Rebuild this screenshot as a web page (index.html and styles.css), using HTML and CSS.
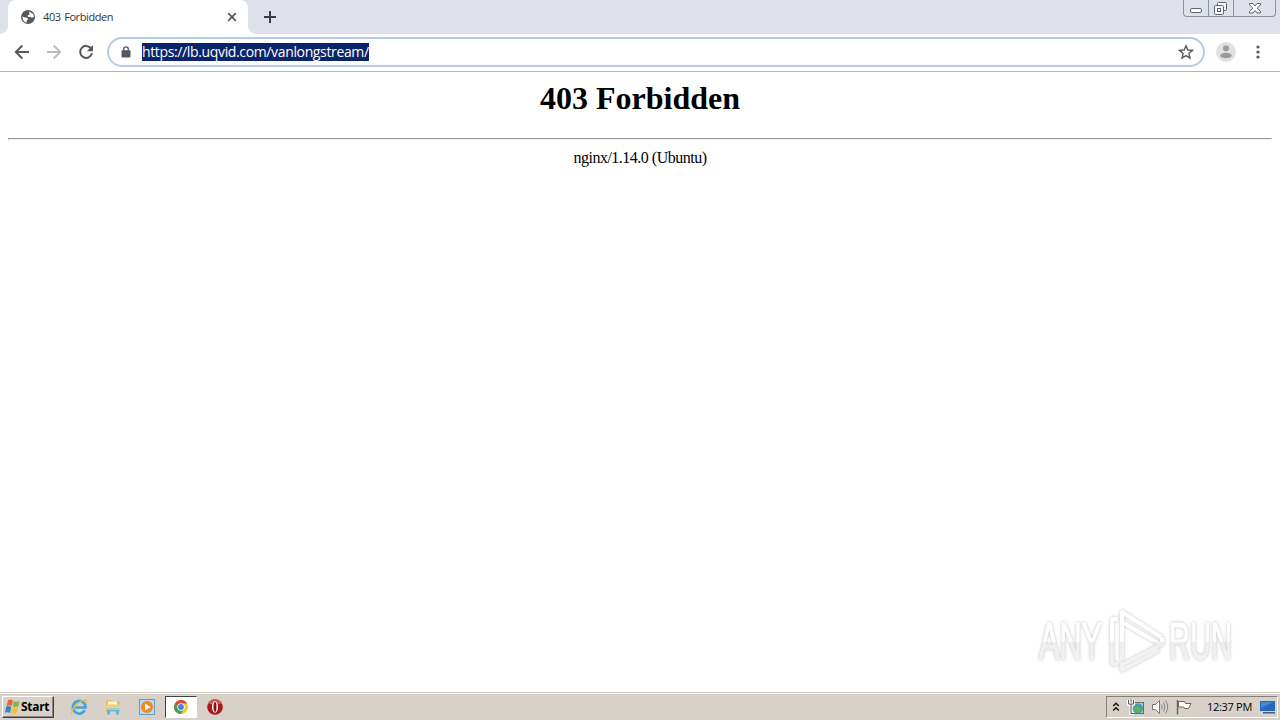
FILE: index.html
```html
<!DOCTYPE html>
<html lang="en">
<head>
    <meta charset="UTF-8">
    <title>403 Forbidden</title>
    <link rel="stylesheet" href="styles.css">
</head>
<body>
    <div class="tab-strip">
        <div class="tab-edge"></div>
        <div class="tab">
            <svg class="globe" width="16" height="16" viewBox="0 0 16 16">
                <circle cx="8" cy="8" r="7" fill="#55595e"/>
                <path d="M2.500 7.500 5 8.500l2 .2 1.200 1.500-1.400 1.100-.3 2.500C4 13.200 2.300 10.800 2.500 7.500zM9 2.500l4 2.200 1 3-2 1.100-2-1-1.800.2-.7-1.500 2-.8z" fill="#fff"/>
            </svg>
            <span class="tab-title">403 Forbidden</span>
            <svg class="tab-close" width="10" height="10" viewBox="0 0 10 10">
                <path d="M1.200 1.200l7.600 7.600M8.800 1.200L1.200 8.800" stroke="#54585d" stroke-width="1.700"/>
            </svg>
        </div>
        <div class="new-tab">
            <svg width="12" height="12" viewBox="0 0 12 12">
                <path d="M6 0v12M0 6h12" stroke="#3a3e44" stroke-width="2"/>
            </svg>
        </div>
        <div class="window-buttons">
            <div class="win-btn">
                <svg width="24" height="16" viewBox="0 0 24 16"><rect x="6.500" y="8.500" width="11" height="4" rx="1.500" fill="#fff" stroke="#5c6370"/></svg>
            </div>
            <div class="win-btn">
                <svg width="24" height="16" viewBox="0 0 24 16" fill="#f7f8fa" stroke="#5c6370"><rect x="8.500" y="2.500" width="9" height="8" rx="1"/><rect x="5.500" y="5.500" width="9" height="9" rx="1"/><rect x="8.500" y="8.500" width="3" height="3"/></svg>
            </div>
            <div class="win-btn wide">
                <svg width="42" height="16" viewBox="0 0 42 16"><path d="M15.500 3.500h3.500l2 2.500 2-2.500h3.500v1.500L23.200 8l3.300 3.500V13H23l-2-2.500L19 13h-3.500v-1.500L18.800 8 15.500 5z" fill="#fff" stroke="#5c6370"/></svg>
            </div>
        </div>
    </div>

    <div class="toolbar">
        <div class="nav">
            <svg width="16" height="16" viewBox="0 0 16 16" fill="none" stroke="#54585d" stroke-width="1.900"><path d="M15 8H2M8.300 1.500L1.800 8l6.500 6.500"/></svg>
            <svg width="16" height="16" viewBox="0 0 16 16" fill="none" stroke="#b9bbbd" stroke-width="1.900"><path d="M1 8h13M7.700 1.500L14.200 8l-6.500 6.500"/></svg>
            <svg width="16" height="16" viewBox="0 0 16 16"><path d="M13.200 4.600A6 6 0 1 0 14 9.300" fill="none" stroke="#54585d" stroke-width="2"/><path d="M15 1v6.200H8.800z" fill="#54585d"/></svg>
        </div>
        <div class="omnibox">
            <svg class="lock" width="10" height="12" viewBox="0 0 10 12"><path d="M2.700 5V3.200a2.300 2.300 0 0 1 4.600 0V5" fill="none" stroke="#54585d" stroke-width="1.300"/><rect x=".5" y="4.300" width="9" height="7.200" rx="1" fill="#54585d"/></svg>
            <span class="url">https://lb.uqvid.com/vanlongstream/</span>
            <svg class="star" width="16" height="16" viewBox="0 0 16 16"><path d="M8 1.800l1.800 4.200 4.700.4-3.600 3 1.100 4.600L8 11.600 4 14l1.100-4.600-3.600-3L6.200 6z" fill="none" stroke="#54585d" stroke-width="1.400"/></svg>
        </div>
        <svg class="avatar" width="20" height="20" viewBox="0 0 20 20"><circle cx="10" cy="10" r="10" fill="#e1e1e1"/><circle cx="10" cy="6.300" r="3" fill="#9b9b9b"/><path d="M4.200 14c0-4.200 11.600-4.200 11.600 0-1.800 3-9.800 3-11.600 0z" fill="#9b9b9b"/></svg>
        <svg class="menu" width="4" height="14" viewBox="0 0 4 14" fill="#54585d"><circle cx="2" cy="2" r="1.600"/><circle cx="2" cy="7" r="1.600"/><circle cx="2" cy="12" r="1.600"/></svg>
    </div>

    <div class="page">
        <h1>403 Forbidden</h1>
        <hr>
        <div class="server">nginx/1.14.0 (Ubuntu)</div>
        <svg class="watermark" width="210" height="74" viewBox="0 0 210 74">
            <defs>
                <linearGradient id="shade" gradientUnits="userSpaceOnUse" x1="0" y1="0" x2="0" y2="74">
                    <stop offset=".49" stop-color="#fff"/>
                    <stop offset=".5" stop-color="#efefef"/>
                    <stop offset="1" stop-color="#f4f4f4"/>
                </linearGradient>
            </defs>
            <g class="mark-text" fill="url(#shade)" stroke="url(#shade)">
                <text x="9" y="54" textLength="63" lengthAdjust="spacingAndGlyphs">ANY</text>
                <text x="139" y="54" textLength="63" lengthAdjust="spacingAndGlyphs">RUN</text>
            </g>
            <g class="mark-logo" fill="none" stroke="url(#shade)">
                <path d="M88 14h-6v44l6 2"/>
                <path d="M92 55V7l39 25M92 17l39 23"/>
                <path d="M132 32v7L92 60v5l37-20"/>
            </g>
        </svg>
    </div>

    <div class="taskbar">
        <div class="start">
            <svg width="17" height="16" viewBox="0 0 17 16">
                <path d="M4 1.200c2-1 3.400-.7 5 .2L7.600 7c-1.800-1-3.300-1-5-.3z" fill="#ed6337"/>
                <path d="M9.800 1.900c2 .9 3.800.9 6 0L14.300 7.600c-2 .8-3.800.7-5.900-.3z" fill="#83b84a"/>
                <path d="M2.200 7.600c2-.8 3.500-.6 5.100.3L6 14c-1.700-1-3.200-1-5.200-.2z" fill="#3c86c6"/>
                <path d="M8.200 8.400c2 .9 3.700 1 5.900.1L12.600 14.500c-2 .9-3.800.8-5.800-.1z" fill="#f5c33b"/>
            </svg>
            <span>Start</span>
        </div>
        <div class="quick-launch">
            <div class="task">
                <svg width="18" height="18" viewBox="0 0 18 18" fill="none"><path d="M14.800 12.200A6.300 6.300 0 1 1 15.500 9.500H5" stroke="#43a5dc" stroke-width="2.700"/><path d="M2.200 15.600C-.5 13.500 7 4.500 14 2.200c3-.9 3 1 1.700 2.800" stroke="#e9bd45" stroke-width="1.400"/></svg>
            </div>
            <div class="task">
                <svg width="18" height="18" viewBox="0 0 18 18"><path d="M2 2h6l1 1.500h7V14H2z" fill="#e0c264"/><path d="M4 3.500h9v5H4z" fill="#fff6c9"/><path d="M2 6.500h14v4H2z" fill="#ecd27c"/><path d="M3 16.500v-6h12v6h-3V13H6v3.500z" fill="#65b5dc"/><path d="M3 10.500h12v1.300H3z" fill="#a4d9ed"/></svg>
            </div>
            <div class="task">
                <svg width="18" height="18" viewBox="0 0 18 18"><rect x="1.500" y="1.500" width="15" height="15" fill="#b9daf1" stroke="#6a9dc7"/><circle cx="9" cy="9" r="6" fill="#f18a20"/><path d="M7 5.500l5.500 3.500L7 12.500z" fill="#fff"/></svg>
            </div>
            <div class="task active">
                <svg width="16" height="16" viewBox="0 0 16 16"><circle cx="8" cy="8" r="7" fill="#f6c934"/><path d="M1.900 4.500A7 7 0 0 1 14.100 4.500H8L5 9.800z" fill="#d9463b"/><path d="M1.900 4.500L5 9.800 8 11.500l3-1.700L8 15A7 7 0 0 1 1.900 4.500z" fill="#3f9c57"/><circle cx="8" cy="8" r="3.700" fill="#fff"/><circle cx="8" cy="8" r="2.900" fill="#4581df"/></svg>
            </div>
            <div class="task">
                <svg width="18" height="18" viewBox="0 0 18 18"><circle cx="9" cy="9" r="7.800" fill="#a7191c"/><path d="M2.500 6a7 7 0 0 1 13 0z" fill="#cf5757"/><ellipse cx="9" cy="9" rx="3" ry="5.800" fill="#fff"/><ellipse cx="9" cy="9" rx="1.500" ry="4.900" fill="#8a1215"/></svg>
            </div>
        </div>
        <div class="tray">
            <svg class="chevrons" width="8" height="10" viewBox="0 0 8 10" fill="none" stroke="#111" stroke-width="1.500"><path d="M1.200 4L4 1.300 6.800 4M1.200 8.500L4 5.800l2.800 2.700"/></svg>
            <svg width="18" height="16" viewBox="0 0 18 16"><rect x="4.500" y="3.500" width="12" height="11" fill="#a9cbd1" stroke="#5d6c70"/><circle cx="11" cy="9.500" r="5" fill="#3f9fac"/><path d="M7 8q3-3 5 0l3 2-4 4-3-1z" fill="#62ae66"/><path d="M1.500 1v4h5V1M4 5v9.500h3M4 0v3" fill="none" stroke="#fff" stroke-width="3"/><path d="M1.500 1v4h5V1M4 5v9.500h3M4 0v3" fill="none" stroke="#555"/></svg>
            <svg width="18" height="16" viewBox="0 0 18 16"><path d="M1.500 5.500h3l4-4v13l-4-4h-3z" fill="#fff" stroke="#777"/><path d="M10.500 5.500q1.500 2.500 0 5M12.500 3.500q3 4.500 0 9M14.500 1.500q4.500 6.500 0 13" fill="none" stroke="#858585"/></svg>
            <svg width="18" height="16" viewBox="0 0 18 16"><path d="M3.500 2.500h6l1 2h5.500l-2.500 5h-4l-1-1.500h-5z" fill="#fff" stroke="#666"/><path d="M2.500 1v14.500" stroke="#666" stroke-width="1.500"/></svg>
            <span class="clock">12:37 PM</span>
            <svg class="desktop" width="18" height="14" viewBox="0 0 18 14"><path d="M1 1h15v10H1z" fill="#2668bd"/><path d="M2 2h13L2 8z" fill="#4289d4"/><path d="M4 12h12v1.500H4z" fill="#435b7a"/></svg>
        </div>
    </div>
</body>
</html>
```

FILE: styles.css
```css
* {
    box-sizing: border-box;
}

body {
    margin: 0;
    width: 1280px;
    height: 720px;
    display: flex;
    flex-direction: column;
    overflow: hidden;
    background: #fff;
    font-family: "Open Sans", "Liberation Sans", sans-serif;
}

svg {
    display: block;
    flex-shrink: 0;
}

/* Browser tabs */
.tab-strip {
    display: flex;
    flex: 0 0 34px;
    background: #dee1e9;
}

.tab-edge {
    width: 8px;
    background: radial-gradient(circle at 0 0, transparent 7.5px, #fff 8px) 0 100% / 8px 8px no-repeat;
}

.tab {
    display: flex;
    align-items: center;
    width: 240px;
    padding: 0 11px 0 12px;
    background: #fff;
    border-radius: 8px 8px 0 0;
}

.tab-title {
    flex: 1;
    margin-left: 7px;
    padding-bottom: 2px;
    font-size: 11px;
    letter-spacing: -0.4px;
    word-spacing: 1px;
    color: #34383d;
}

.new-tab {
    display: flex;
    align-items: center;
    flex: 1;
    padding-left: 16px;
    background: radial-gradient(circle at 100% 0, transparent 7.5px, #fff 8px) 0 100% / 8px 8px no-repeat;
}

.window-buttons {
    display: flex;
    width: 93px;
    height: 17px;
    margin-right: 4px;
    border: 1px solid #8b919d;
    border-top: 0;
    border-radius: 0 0 4px 4px;
}

.win-btn {
    width: 25px;
    border-right: 1px solid #8b919d;
}

.win-btn.wide {
    width: 42px;
    border: 0;
}

/* Address row */
.toolbar {
    display: flex;
    align-items: center;
    flex: 0 0 38px;
    padding: 0 20px 1px 14px;
    border-bottom: 1px solid #b4b5b7;
}

.nav {
    display: flex;
    gap: 16px;
    width: 93px;
}

.omnibox {
    display: flex;
    align-items: center;
    width: 1098px;
    height: 30px;
    padding: 0 9px 0 12px;
    border: 2px solid #b5cbed;
    border-radius: 15px;
}

.url {
    width: 227px;
    height: 18px;
    margin-left: 11px;
    line-height: 18px;
    font-size: 14px;
    letter-spacing: -0.36px;
    white-space: nowrap;
    color: #fff;
    background: #0a246a;
}

.star {
    margin-left: auto;
}

.avatar {
    margin-left: 11px;
}

.menu {
    margin-left: auto;
}

/* Error page */
.page {
    position: relative;
    flex: 1;
    padding: 8px;
    font-family: "Liberation Serif", "Times New Roman", serif;
    text-align: center;
    color: #000;
}

h1 {
    margin: 0 0 21px;
    font-size: 32px;
    line-height: 37px;
}

hr {
    margin: 0 0 9px;
}

.server {
    font-size: 16px;
    line-height: 18px;
    letter-spacing: -0.5px;
}

.watermark {
    position: absolute;
    left: 1030px;
    top: 533px;
    overflow: visible;
    filter: drop-shadow(0 0 1.5px rgba(0, 0, 0, 0.25));
}

.mark-text {
    font-family: "Liberation Sans", Arial, sans-serif;
    font-size: 51px;
    stroke-width: 1.2px;
}

.mark-logo {
    stroke-width: 4px;
    stroke-linejoin: round;
}

/* Windows taskbar */
.taskbar {
    display: flex;
    align-items: center;
    flex: 0 0 28px;
    padding: 2px 2px 1px;
    border-top: 1px solid #d4d0c8;
    box-shadow: inset 0 1px #fff;
    background: #d8d1ca;
}

.start {
    display: flex;
    align-items: center;
    width: 52px;
    height: 22px;
    padding-left: 1px;
    border: 1px solid;
    border-color: #fff #404040 #404040 #fff;
    box-shadow: inset -1px -1px #8b8681;
    font-size: 12px;
    font-weight: bold;
    letter-spacing: -0.3px;
    color: #000;
}

.start span {
    padding-bottom: 1px;
}

.quick-launch {
    display: flex;
    align-items: center;
    gap: 2px;
    flex: 1;
    padding-left: 9px;
}

.task {
    display: flex;
    align-items: center;
    justify-content: center;
    width: 32px;
    height: 22px;
}

.task.active {
    background: #fff;
    border: 1px solid;
    border-color: #404040 #fff #fff #404040;
}

.tray {
    display: flex;
    align-items: center;
    gap: 6px;
    width: 172px;
    height: 22px;
    padding: 0 0 0 5px;
    border: 1px solid;
    border-color: #858078 #fff #fff #858078;
}

.chevrons {
    margin-right: 1px;
}

.clock {
    width: 46px;
    margin-left: 8px;
    padding-bottom: 1px;
    font-size: 11px;
    letter-spacing: -0.3px;
    white-space: nowrap;
    color: #000;
}
```
